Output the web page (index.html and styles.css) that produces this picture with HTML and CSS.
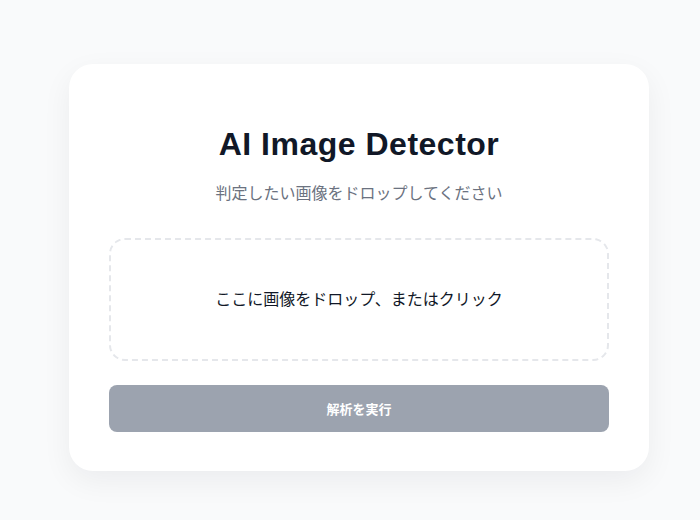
FILE: index.html
```html
<!DOCTYPE html>
<html>
<head>
<title>AI Image Detector</title>
<link rel="stylesheet" href="styles.css">
</head>
<body>
    <div class="page">
        <div class="card">
            <h1 class="title">AI Image Detector</h1>
            <p class="subtitle">判定したい画像をドロップしてください</p>
            <div class="dropzone">ここに画像をドロップ、またはクリック</div>
            <button class="run" disabled>解析を実行</button>
        </div>
    </div>
</body>
</html>
```
FILE: styles.css
```css
html, body {
    margin: 0;
    height: 100%;
}
body {
    background-color: #f9fafb;
    font-family: "Liberation Sans", "Noto Sans CJK JP", sans-serif;
    color: #111827;
}
.page {
    padding: 64px 0 0 69px;
}
.card {
    box-sizing: border-box;
    width: 580px;
    height: 407px;
    background-color: #ffffff;
    border-radius: 24px;
    padding: 40px;
    box-shadow: 0 10px 30px rgba(17, 24, 39, 0.06);
    text-align: center;
}
.title {
    margin: 22px 0 0;
    font-size: 32px;
    line-height: 36px;
    font-weight: bold;
    letter-spacing: 0.5px;
    color: #111827;
}
.subtitle {
    margin: 20px 0 0;
    font-size: 16px;
    line-height: 24px;
    color: #6b7280;
}
.dropzone {
    box-sizing: border-box;
    margin-top: 32px;
    height: 123px;
    padding-bottom: 4px;
    border: 2px dashed #e5e7eb;
    border-radius: 16px;
    display: flex;
    align-items: center;
    justify-content: center;
    font-size: 16px;
    color: #111827;
}
.run {
    display: block;
    width: 100%;
    height: 47px;
    margin-top: 24px;
    padding-bottom: 2px;
    border: none;
    border-radius: 8px;
    background-color: #9ca3af;
    color: #ffffff;
    font-family: "Liberation Sans", "Noto Sans CJK JP", sans-serif;
    font-size: 13px;
    font-weight: bold;
}
```
